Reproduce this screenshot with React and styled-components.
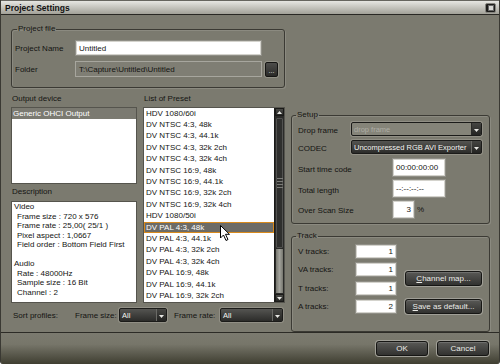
import React from 'react'
import styled, { createGlobalStyle } from 'styled-components'

const GlobalStyle = createGlobalStyle`
  html, body { margin: 0; padding: 0; background: #fff; }
  body {
    font-family: "Liberation Sans", Arial, sans-serif;
    font-size: 8px;
    color: #141412;
  }
  * { box-sizing: border-box; }
`

const Window = styled.div`
  width: 500px;
  height: 364px;
  display: flex;
  flex-direction: column;
  background: #7b7a6f;
  border-left: 1px solid #3a3933;
  border-right: 1px solid #3a3933;
  border-radius: 0 0 3px 3px;
  overflow: hidden;
`

const TitleBar = styled.div`
  height: 15px;
  flex: none;
  display: flex;
  align-items: center;
  justify-content: space-between;
  padding: 0 3px 0 4px;
  background: linear-gradient(#e6e6e2, #a2a198);
  border-top: 1px solid #66655f;
  border-bottom: 1px solid #292824;
`

const Title = styled.span`
  font-size: 8.5px;
  font-weight: bold;
  color: #111;
`

const CloseBtn = styled.span`
  width: 11px;
  height: 10px;
  border-radius: 2px;
  background: #1d1d1b;
  border: 1px solid #85847e;
  display: flex;
  align-items: center;
  justify-content: center;
  &::after {
    content: '';
    width: 4px;
    height: 4px;
    background: #d8d8d4;
    border: 1px solid #666;
  }
`

const Content = styled.div`
  flex: 1;
  display: flex;
  gap: 6px;
  padding: 9px 0 0 10px;
`

const LeftArea = styled.div`
  width: 274px;
  display: flex;
  flex-direction: column;
`

const RightArea = styled.div`
  width: 199px;
  display: flex;
  flex-direction: column;
  padding-top: 86px;
`

const Group = styled.fieldset`
  margin: ${p => p.$mt || 0}px 0 0 0;
  border: 1px solid #3b3a34;
  border-radius: 3px;
  box-shadow: 1px 1px 0 rgba(255, 255, 255, 0.12), inset 1px 1px 0 rgba(255, 255, 255, 0.12);
  padding: ${p => p.$pad};
  min-width: 0;
`

const Legend = styled.legend`
  padding: 0 1px;
  margin-left: ${p => p.$ml}px;
  line-height: 10px;
  font-size: 8px;
  color: #141412;
`

const FormRow = styled.div`
  display: flex;
  align-items: center;
  height: ${p => p.$h || 16}px;
  margin-top: ${p => p.$mt || 0}px;
`

const Label = styled.span`
  width: ${p => p.$w}px;
  flex: none;
  white-space: nowrap;
  padding-top: ${p => p.$dy || 0}px;
  margin-left: ${p => p.$ml || 0}px;
`

const TextField = styled.div`
  width: ${p => p.$w}px;
  height: ${p => p.$h || 16}px;
  flex: none;
  display: flex;
  align-items: center;
  justify-content: ${p => (p.$right ? 'flex-end' : 'flex-start')};
  padding: 0 3px;
  background: ${p => (p.$disabled ? '#7f7e74' : '#fff')};
  border: 1px solid ${p => (p.$disabled ? '#a7a69e' : '#8f8e86')};
  box-shadow: ${p => (p.$disabled ? 'none' : 'inset 0 0 0 1px #d4d3cd')};
  white-space: nowrap;
`

const DotsButton = styled.span`
  width: 13px;
  height: 15px;
  margin-left: 3px;
  border-radius: 2px;
  background: linear-gradient(#4d4d4a, #2a2a28);
  border: 1px solid #151513;
  box-shadow: 0 0 0 1px rgba(200, 200, 190, 0.3);
  color: #e6e6e2;
  font-size: 7px;
  display: flex;
  align-items: flex-end;
  justify-content: center;
  padding-bottom: 2px;
  line-height: 1;
`

const ListsRow = styled.div`
  display: flex;
  gap: 6px;
  margin-top: 6px;
`

const Column = styled.div`
  width: ${p => p.$w}px;
  display: flex;
  flex-direction: column;
`

const Caption = styled.div`
  line-height: 10px;
  height: 10px;
  padding-left: 1px;
  margin: ${p => p.$mt || 0}px 0 ${p => p.$mb || 3}px;
`

const ListBox = styled.div`
  position: relative;
  height: ${p => p.$h}px;
  background: #fff;
  border: 1px solid #55544d;
  display: flex;
  overflow: hidden;
`

const Rows = styled.div`
  flex: 1;
  display: flex;
  flex-direction: column;
`

const Item = styled.div`
  height: 11.4px;
  line-height: 10px;
  padding-left: ${p => (p.$selected ? 1 : 2)}px;
  white-space: nowrap;
  color: ${p => (p.$selected ? '#fff' : '#141412')};
  background: ${p => (p.$selected ? p.$bg || '#7b7a71' : 'transparent')};
  border: ${p => (p.$outline ? '1px solid #d88a1d' : 'none')};
  display: flex;
  align-items: center;
`

const Scrollbar = styled.div`
  width: 10px;
  flex: none;
  display: flex;
  flex-direction: column;
  background: #2b2b29;
  border-left: 1px solid #1a1a18;
`

const ScrollArrow = styled.div`
  height: 8px;
  flex: none;
  display: flex;
  align-items: center;
  justify-content: center;
  background: linear-gradient(#4a4a47, #282826);
  border: 1px solid #1a1a18;
`

const Thumb = styled.div`
  height: 130px;
  flex: none;
  margin: 2px 1px 1px;
  background: #2f2f2d;
  border: 1px solid #525250;
  border-radius: 1px;
  display: flex;
  flex-direction: column;
  align-items: center;
  justify-content: center;
  gap: 2px;
  & > i {
    display: block;
    width: 6px;
    height: 1px;
    background: #7b7b77;
  }
`

const Track = styled.div`
  flex: 1;
  margin: 0 1px 1px;
  background: linear-gradient(90deg, #77776f, #a3a39c, #77776f);
`

const DescBox = styled.div`
  height: 102px;
  background: #fff;
  border: 1px solid #55544d;
  padding: 0 2px;
  line-height: 9.5px;
`

const DescLine = styled.div`
  height: 9.5px;
  padding-left: ${p => (p.$indent ? 3 : 0)}px;
  white-space: nowrap;
`

const SortRow = styled.div`
  display: flex;
  align-items: center;
  height: 14px;
  margin-top: 5px;
  padding-left: 2px;
`

const Select = styled.div`
  width: ${p => p.$w}px;
  height: 14px;
  flex: none;
  display: flex;
  border: 1px solid #1b1b19;
  border-radius: 2px;
  background: ${p => (p.$disabled ? '#858479' : 'linear-gradient(#545451, #2c2c2a)')};
  color: ${p => (p.$disabled ? '#aeada5' : '#f4f4f0')};
  box-shadow: 0 0 0 1px rgba(185, 184, 176, 0.35);
  overflow: hidden;
`

const SelectText = styled.span`
  flex: 1;
  padding-left: 2px;
  display: flex;
  align-items: center;
  white-space: nowrap;
  overflow: hidden;
  font-size: 7.5px;
`

const SelectArrow = styled.span`
  width: 10px;
  flex: none;
  display: flex;
  align-items: flex-end;
  justify-content: center;
  padding-bottom: 3px;
  background: linear-gradient(#454542, #242422);
  border-left: 1px solid ${p => (p.$disabled ? '#2a2a28' : '#6a6a66')};
`

const Button = styled.button`
  width: ${p => p.$w}px;
  height: 15px;
  padding: 0;
  font: inherit;
  font-size: 8px;
  color: #ecece8;
  background: linear-gradient(#595956, #323230);
  border: 1px solid #161614;
  border-radius: 3px;
  box-shadow: 0 0 0 1px #a09f97, inset 0 1px 0 rgba(255, 255, 255, 0.14);
  & u { text-underline-offset: 1px; }
`

const TrackBody = styled.div`
  display: flex;
`

const TrackGrid = styled.div`
  display: grid;
  grid-template-columns: 57px 42px;
  grid-auto-rows: 15px;
  row-gap: 3.3px;
  align-items: center;
`

const ButtonStack = styled.div`
  display: flex;
  flex-direction: column;
  justify-content: flex-end;
  gap: 12.7px;
  margin-left: 8px;
`

const Footer = styled.div`
  height: 33px;
  flex: none;
  display: flex;
  justify-content: flex-end;
  align-items: flex-start;
  gap: 9px;
  padding: 8px 10px 0 0;
  border-top: 1px solid #2c2b26;
  background: linear-gradient(#7b7a6f 0%, #77766a 35%, #3c3b2e 100%);
`

const Cursor = styled.svg`
  position: absolute;
  left: 76px;
  top: 117px;
`

const Arrow = ({ up }) => (
  <svg width="5" height="3" viewBox="0 0 5 3">
    <path d={up ? 'M0 3 L2.5 0 L5 3 Z' : 'M0 0 L5 0 L2.5 3 Z'} fill="#e8e8e4" />
  </svg>
)

const presets = [
  'HDV 1080/60i',
  'DV NTSC 4:3, 48k',
  'DV NTSC 4:3, 44.1k',
  'DV NTSC 4:3, 32k 2ch',
  'DV NTSC 4:3, 32k 4ch',
  'DV NTSC 16:9, 48k',
  'DV NTSC 16:9, 44.1k',
  'DV NTSC 16:9, 32k 2ch',
  'DV NTSC 16:9, 32k 4ch',
  'HDV 1080/50i',
  'DV PAL 4:3, 48k',
  'DV PAL 4:3, 44.1k',
  'DV PAL 4:3, 32k 2ch',
  'DV PAL 4:3, 32k 4ch',
  'DV PAL 16:9, 48k',
  'DV PAL 16:9, 44.1k',
  'DV PAL 16:9, 32k 2ch',
]

const description = [
  ['Video', false],
  ['Frame size : 720 x 576', true],
  ['Frame rate : 25,00( 25/1 )', true],
  ['Pixel aspect : 1,0667', true],
  ['Field order : Bottom Field First', true],
  ['', false],
  ['Audio', false],
  ['Rate : 48000Hz', true],
  ['Sample size : 16 Bit', true],
  ['Channel : 2', true],
]

const tracks = [
  ['V tracks:', '1'],
  ['VA tracks:', '1'],
  ['T tracks:', '1'],
  ['A tracks:', '2'],
]

function Dropdown({ w, value, disabled }) {
  return (
    <Select $w={w} $disabled={disabled}>
      <SelectText>{value}</SelectText>
      <SelectArrow $disabled={disabled}><Arrow /></SelectArrow>
    </Select>
  )
}

export default function App() {
  return (
    <Window>
      <GlobalStyle />
      <TitleBar>
        <Title>Project Settings</Title>
        <CloseBtn />
      </TitleBar>

      <Content>
        <LeftArea>
          <Group $pad="6px 3px 10px 3px">
            <Legend $ml={2}>Project file</Legend>
            <FormRow>
              <Label $w={60}>Project Name</Label>
              <TextField $w={187}>Untitled</TextField>
            </FormRow>
            <FormRow $mt={5}>
              <Label $w={60}>Folder</Label>
              <TextField $w={187} $disabled>T:\Capture\Untitled\Untitled</TextField>
              <DotsButton>...</DotsButton>
            </FormRow>
          </Group>

          <ListsRow>
            <Column $w={126}>
              <Caption>Output device</Caption>
              <ListBox $h={77}>
                <Rows>
                  <Item $selected>Generic OHCI Output</Item>
                </Rows>
              </ListBox>
              <Caption $mt={3} $mb={4}>Description</Caption>
              <DescBox>
                {description.map(([text, indent], i) => (
                  <DescLine key={i} $indent={indent}>{text}</DescLine>
                ))}
              </DescBox>
            </Column>

            <Column $w={142}>
              <Caption>List of Preset</Caption>
              <ListBox $h={196}>
                <Rows>
                  {presets.map((p, i) => (
                    <Item key={p} $selected={i === 10} $outline={i === 10} $bg="#6c6b66">{p}</Item>
                  ))}
                </Rows>
                <Scrollbar>
                  <ScrollArrow><Arrow up /></ScrollArrow>
                  <Thumb><i /><i /><i /><i /></Thumb>
                  <Track />
                  <ScrollArrow><Arrow /></ScrollArrow>
                </Scrollbar>
                <Cursor width="11" height="17" viewBox="0 0 11 17">
                  <path d="M0.5 0.5 L0.5 13 L3.5 10 L6 15.5 L8 14.5 L5.5 9.3 L9.5 9.3 Z" fill="#fff" stroke="#000" strokeWidth="1" />
                </Cursor>
              </ListBox>
            </Column>
          </ListsRow>

          <SortRow>
            <Label $w={62}>Sort profiles:</Label>
            <Label $w={44}>Frame size:</Label>
            <Dropdown w={48} value="All" />
            <Label $w={46} $ml={7}>Frame rate:</Label>
            <Dropdown w={63} value="All" />
          </SortRow>
        </LeftArea>

        <RightArea>
          <Group $pad="2px 7px 4px 6px">
            <Legend $ml={-2}>Setup</Legend>
            <FormRow $h={14}>
              <Label $w={53} $dy={3}>Drop frame</Label>
              <Dropdown w={131} value="drop frame" disabled />
            </FormRow>
            <FormRow $h={14} $mt={4}>
              <Label $w={53} $dy={3}>CODEC</Label>
              <Dropdown w={131} value="Uncompressed RGB AVI Exporter" />
            </FormRow>
            <FormRow $h={19} $mt={4}>
              <Label $w={94} $dy={3}>Start time code</Label>
              <TextField $w={54} $h={19}>00:00:00:00</TextField>
            </FormRow>
            <FormRow $h={19} $mt={2}>
              <Label $w={94} $dy={3}>Total length</Label>
              <TextField $w={54} $h={19}>--:--:--:--</TextField>
            </FormRow>
            <FormRow $h={19} $mt={2}>
              <Label $w={94} $dy={2}>Over Scan Size</Label>
              <TextField $w={23} $h={19} $right>3</TextField>
              <Label $w={12} $ml={2}>%</Label>
            </FormRow>
          </Group>

          <Group $mt={7} $pad="3px 7px 17px 6px">
            <Legend $ml={-2}>Track</Legend>
            <TrackBody>
              <TrackGrid>
                {tracks.map(([label, value]) => (
                  <React.Fragment key={label}>
                    <Label $w={57}>{label}</Label>
                    <TextField $w={42} $h={15} $right>{value}</TextField>
                  </React.Fragment>
                ))}
              </TrackGrid>
              <ButtonStack>
                <Button $w={77}><u>C</u>hannel map...</Button>
                <Button $w={77}><u>S</u>ave as default...</Button>
              </ButtonStack>
            </TrackBody>
          </Group>
        </RightArea>
      </Content>

      <Footer>
        <Button $w={52}>OK</Button>
        <Button $w={52}>Cancel</Button>
      </Footer>
    </Window>
  )
}
